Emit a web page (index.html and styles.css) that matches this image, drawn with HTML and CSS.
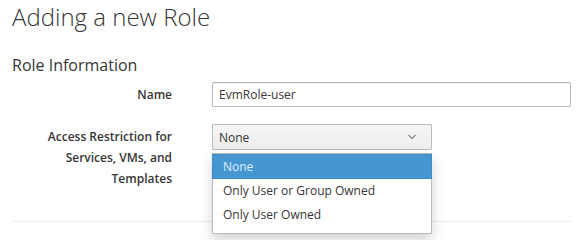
FILE: index.html
```
<!DOCTYPE html>
<html lang="en">
<head>
  <meta charset="UTF-8" />
  <title>Adding a new Role</title>
  <link rel="stylesheet" href="styles.css">
</head>
<body>

<div class="page">
  <h1>Adding a new Role</h1>
  <h3>Role Information</h3>

  <form class="role-form">
    <div class="form-row">
      <label for="name">Name</label>
      <div class="field">
        <input type="text" id="name" value="EvmRole-user">
      </div>
    </div>

    <div class="form-row">
      <label>Access Restriction for Services, VMs, and Templates</label>
      <div class="field">
        <div class="select">
          <button type="button" class="select-toggle">
            <span>None</span>
            <svg width="10" height="6" viewBox="0 0 10 6"><path d="M1.5 1 L5 4.5 L8.5 1" fill="none" stroke="#8b8d8f" stroke-width="1.3"/></svg>
          </button>
          <ul class="select-menu">
            <li class="active">None</li>
            <li>Only User or Group Owned</li>
            <li>Only User Owned</li>
          </ul>
        </div>
      </div>
    </div>
  </form>

  <hr class="divider">
</div>

</body>
</html>
```

FILE: styles.css
```
body {
  font-family: 'Open Sans', sans-serif;
  font-size: 12px;
  color: #363636;
  background: #fff;
  margin: 0;
  padding: 0;
}

.page {
  padding: 0 16px 18px 12px;
}

h1 {
  font-size: 24px;
  font-weight: 300;
  color: #363636;
  margin: 0;
  padding-top: 2px;
  line-height: 30px;
}

h3 {
  font-size: 16px;
  font-weight: 400;
  margin: 22px 0 6px;
  line-height: 22px;
}

.form-row {
  display: flex;
  margin-bottom: 17px;
}

.form-row label {
  width: 200px;
  text-align: right;
  font-weight: 600;
  line-height: 21px;
  padding-top: 2px;
  padding-right: 40px;
  box-sizing: border-box;
  flex: none;
}

.field {
  flex: 1;
}

.field input {
  width: 100%;
  height: 25px;
  box-sizing: border-box;
  border: 1px solid #bbb;
  border-radius: 1px;
  padding: 2px 6px;
  font-family: inherit;
  font-size: 12px;
  color: #363636;
  box-shadow: inset 0 1px 1px rgba(3,3,3,0.075);
}

.select {
  position: relative;
  width: 220px;
}

.select-toggle {
  width: 100%;
  height: 26px;
  display: flex;
  align-items: center;
  justify-content: space-between;
  padding: 0 14px 0 6px;
  border: 1px solid #bbb;
  border-radius: 1px;
  background: linear-gradient(#f5f5f5, #ededed);
  font-family: inherit;
  font-size: 12px;
  color: #363636;
}

.select-menu {
  position: absolute;
  z-index: 10;
  top: 29px;
  left: 0;
  right: 0;
  margin: 0;
  padding: 0 0 6px;
  list-style: none;
  background: #fff;
  border: 1px solid #bbb;
  box-shadow: 0 6px 12px rgba(0,0,0,0.175);
}

.select-menu li {
  line-height: 24px;
  padding: 0 10px;
  white-space: nowrap;
}

.select-menu li.active {
  background: #4696d2;
  color: #dff0fb;
  border: 1px solid #3a8ac4;
  margin: 0 -1px;
  line-height: 23px;
}

.divider {
  border: 0;
  border-top: 1px solid #ededed;
  margin: 32px 0 0;
}
```
